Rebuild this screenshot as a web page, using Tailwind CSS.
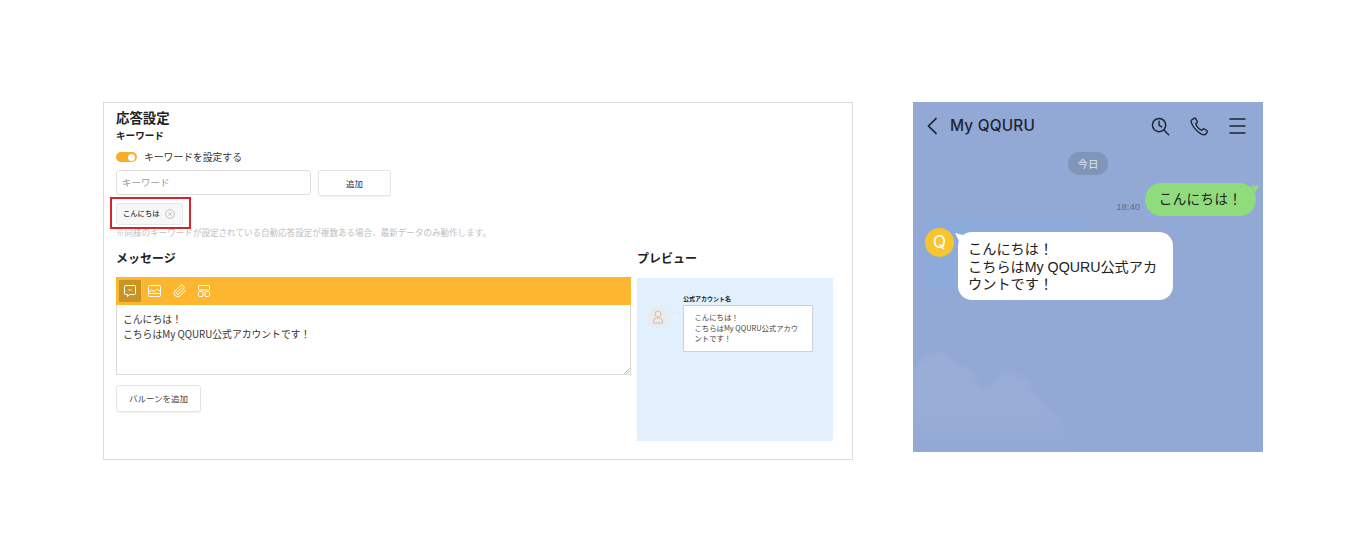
<!DOCTYPE html>
<html lang="ja">
<head>
<meta charset="utf-8">
<script src="https://cdn.jsdelivr.net/npm/@tailwindcss/browser@4"></script>
</head>
<body class="bg-white overflow-hidden">
<main class="w-[1366px] h-[541px] flex items-start pt-[102px] pl-[103px] gap-[60px] font-['Noto_Sans_CJK_JP',sans-serif] text-[#222]">

  <section class="relative w-[750px] h-[358px] border border-[#dcdcdc] pl-[12px] pr-[19px] flex flex-col">
    <h1 class="mt-[5px] text-[13.4px] leading-[18px] font-bold text-[#222]">応答設定</h1>
    <h2 class="mt-[2px] text-[9.6px] leading-[14px] font-bold">キーワード</h2>

    <div class="mt-[8px] flex items-center gap-[7px] h-[14px]">
      <span class="w-[21px] h-[10px] rounded-full bg-[#f9ad28] flex items-center justify-end pr-[2px]"><span class="w-[7px] h-[7px] rounded-full bg-white"></span></span>
      <span class="text-[9.8px] leading-[14px] text-[#333]">キーワードを設定する</span>
    </div>

    <div class="mt-[6px] flex gap-[7px] items-start">
      <div class="w-[195px] h-[25px] border border-[#dedede] rounded-[3px] px-[5px] flex items-center text-[9.5px] text-[#9a9a9a]">キーワード</div>
      <div class="w-[73px] h-[26px] border border-[#e4e4e4] rounded-[3px] shadow-[0_1px_1px_rgba(0,0,0,0.05)] flex items-center justify-center text-[8.5px] text-[#333]">追加</div>
    </div>

    <div class="mt-[7px] w-[67px] h-[22px] rounded-[3px] border border-[#e8e8e8] bg-[#f7f7f7] flex items-center pl-[6px] gap-[6px]">
      <span class="text-[7.3px] font-medium leading-none whitespace-nowrap text-[#333]">こんにちは</span>
      <svg class="w-[10px] h-[10px] shrink-0" viewBox="0 0 10 10" fill="none" stroke="#aaa" stroke-width="0.7"><circle cx="5" cy="5" r="4.4"/><path d="M3.3 3.3l3.4 3.4M6.7 3.3l-3.4 3.4"/></svg>
    </div>
    <p class="mt-[1px] text-[8.55px] leading-[12px] text-[#c0c0c0] whitespace-nowrap">※同様のキーワードが設定されている自動応答設定が複数ある場合、最新データのみ動作します。</p>

    <div class="mt-[11px] flex gap-[6px]">
      <div class="w-[515px] flex flex-col items-start">
        <h2 class="text-[12px] leading-[18px] font-bold">メッセージ</h2>
        <div class="mt-[10px] w-full h-[28px] bg-[#fdb62f] flex items-center pl-[3px]">
          <span class="w-[22px] h-[22px] bg-[#c99325] flex items-center justify-center">
            <svg class="w-[14px] h-[14px]" viewBox="0 0 14 14" fill="none" stroke="#fff" stroke-width="1"><path d="M2.5 1.5h9a1 1 0 0 1 1 1v7a1 1 0 0 1-1 1H6.5L4.5 12.6V10.5h-2a1 1 0 0 1-1-1v-7a1 1 0 0 1 1-1z"/><path d="M5 6h4" stroke-width="0.7"/></svg>
          </span>
          <span class="ml-[7px] w-[13px] h-[13px] flex items-center justify-center">
            <svg class="w-[13px] h-[12px]" viewBox="0 0 13 12" fill="none" stroke="#fff" stroke-width="1"><rect x="0.5" y="0.5" width="12" height="11" rx="1"/><path d="M0.5 7.5l3-2.5 2.5 1.5 3-2.5 3 2M0.5 8.5h12"/></svg>
          </span>
          <span class="ml-[12px] w-[13px] h-[13px] flex items-center justify-center">
            <svg class="w-[14px] h-[14px] shrink-0" viewBox="0 0 24 24" fill="none" stroke="#fff" stroke-width="1.7" stroke-linecap="round" stroke-linejoin="round"><path d="m21.44 11.05-9.19 9.19a6 6 0 0 1-8.49-8.49l8.57-8.57A4 4 0 1 1 18 8.84l-8.59 8.57a2 2 0 0 1-2.83-2.83l8.49-8.48"/></svg>
          </span>
          <span class="ml-[11px] w-[13px] h-[13px] flex items-center justify-center">
            <svg class="w-[12px] h-[12px]" viewBox="0 0 12 12" fill="none" stroke="#fff" stroke-width="1"><rect x="0.5" y="0.5" width="11" height="4.5" rx="1"/><rect x="0.5" y="6.5" width="4.5" height="5" rx="1"/><rect x="7" y="6.5" width="4.5" height="5" rx="1"/></svg>
          </span>
        </div>
        <div class="relative w-full h-[70px] border border-t-0 border-[#d8d8d8] px-[6px] pt-[7px] text-[9.8px] leading-[15px] text-[#333]">
          こんにちは！<br>こちらはMy QQURU公式アカウントです！
          <svg class="absolute right-0 bottom-0 w-[6px] h-[6px]" viewBox="0 0 6 6" stroke="#888" stroke-width="0.6"><path d="M0.5 5.5l5-5M3 5.5l2.5-2.5"/></svg>
        </div>
        <div class="mt-[10px] w-[85px] h-[27px] border border-[#e4e4e4] rounded-[3px] shadow-[0_1px_1px_rgba(0,0,0,0.05)] flex items-center justify-center text-[8.5px] text-[#444]">バルーンを追加</div>
      </div>

      <div class="w-[196px] flex flex-col">
        <h2 class="text-[12px] leading-[18px] font-bold">プレビュー</h2>
        <div class="mt-[11px] h-[163px] bg-[#e2f0fd] flex pt-[16px] pl-[10px]">
          <div class="mt-[12px] w-[22px] h-[22px] rounded-full bg-[#e9ecef] flex items-center justify-center shrink-0">
            <svg class="w-[12px] h-[14px]" viewBox="0 0 12 14" fill="none" stroke="#c9b9a6" stroke-width="0.9"><circle cx="6" cy="4" r="3"/><path d="M1.5 13v-2a3 3 0 0 1 3-3h3a3 3 0 0 1 3 3v2z"/></svg>
          </div>
          <div class="mt-[20px] ml-[4px] w-0 h-0 border-y-[3px] border-y-transparent border-r-[5px] border-r-[#eef3f8]"></div>
          <div class="ml-[5px] flex flex-col">
            <span class="text-[6px] leading-[9px] font-bold text-[#222]">公式アカウント名</span>
            <div class="mt-[2px] w-[130px] h-[47px] bg-white border border-[#cfcfcf] rounded-[1px] pl-[10.5px] pt-[6px] text-[7.35px] leading-[10.5px] text-[#444] whitespace-nowrap">こんにちは！<br>こちらはMy QQURU公式アカウ<br>ントです！</div>
          </div>
        </div>
      </div>
    </div>

    <div class="absolute left-[6px] top-[94px] w-[81px] h-[32px] border-2 border-[#d3252b]"></div>
  </section>

  <section class="relative w-[350px] h-[350px] bg-[#93a9d5] overflow-hidden flex flex-col font-['Liberation_Sans','Noto_Sans_CJK_JP',sans-serif]">
    <svg class="absolute left-0 bottom-0 w-[170px] h-[110px]" viewBox="0 0 170 110" style="filter:blur(3px)">
      <defs><linearGradient id="cloud" gradientUnits="userSpaceOnUse" x1="0" y1="10" x2="0" y2="108"><stop offset="0" stop-color="#a0b3d9" stop-opacity="0.5"/><stop offset="0.6" stop-color="#a0b3d9" stop-opacity="0.4"/><stop offset="1" stop-color="#a0b3d9" stop-opacity="0"/></linearGradient></defs>
      <path fill="url(#cloud)" d="M0 108V30C8 16 24 8 32 12C38 16 42 24 48 26C56 24 60 32 64 44C68 48 72 46 76 48C82 32 100 26 112 38C122 50 132 68 150 82L160 108Z"/>
    </svg>
    <div class="absolute left-[10px] top-[118px] w-[162px] h-[70px] bg-[#8dabda]"></div>

    <header class="relative h-[48px] mb-[2px] flex items-center pl-[13px] pr-[17px] shrink-0 text-[#1d2433]">
      <svg class="w-[12px] h-[18px] shrink-0" viewBox="0 0 12 18" fill="none" stroke="#1d2433" stroke-width="1.7"><path d="M10.5 1.2L2.5 9l8 7.8"/></svg>
      <span class="ml-[12px] text-[15.4px] font-medium tracking-[0.2px] font-['Inter',sans-serif]">My QQURU</span>
      <svg class="ml-auto w-[19px] h-[19px]" viewBox="0 0 20 20" fill="none" stroke="#1d2433" stroke-width="1.5" stroke-linecap="round"><circle cx="8.5" cy="8.5" r="7"/><path d="M13.6 13.6l5 5M8.5 4.5v4.3l2.8 1.7"/></svg>
      <svg class="ml-[20px] w-[19px] h-[19px]" viewBox="0 0 20 20" fill="none" stroke="#1d2433" stroke-width="1.4"><path d="M2.2 2.7l2.5-1.5c.5-.3 1 0 1.3.5l1.6 3c.2.5.1 1-.3 1.3L6 7c.6 2.6 3.6 6.3 6.6 7l1.3-1.3c.4-.4 1-.4 1.4-.1l2.6 1.9c.5.4.5 1 .2 1.5l-1.5 1.9c-.8 1-2.8.9-5-.2C7 15.2 2.2 9.5 1.3 5.5c-.3-1.3.1-2.3.9-2.8z"/></svg>
      <svg class="ml-[20px] w-[17px] h-[16px]" viewBox="0 0 17 16" stroke="#1d2433" stroke-width="1.5"><path d="M0.5 1h16M0.5 8h16M0.5 15h16"/></svg>
    </header>

    <div class="relative flex justify-center">
      <span class="w-[40px] h-[23px] rounded-full bg-[#8096b8] text-[#dfe6f2] text-[10.5px] flex items-center justify-center font-['Noto_Sans_CJK_JP',sans-serif]">今日</span>
    </div>

    <div class="relative mt-[8px] flex justify-end items-end pr-[7px]">
      <span class="mr-[5px] mb-[3px] text-[9.5px] leading-[12px] text-[#5f6e88]">18:40</span>
      <div class="relative w-[111px] h-[33px] pt-[1px] rounded-[17px] bg-[#8fdc7d] flex items-center justify-center text-[13.5px] text-[#222] tracking-[0.4px]">
        こんにちは！
        <svg class="absolute right-[-3px] top-[2px] w-[8px] h-[8px]" viewBox="0 0 8 8" fill="#8fdc7d"><path d="M0 1l8-1-4 8z"/></svg>
      </div>
    </div>

    <div class="relative mt-[16px] pl-[12px] flex items-start">
      <div class="mt-[-4px] w-[29px] h-[29px] rounded-full bg-[#f7c52e] flex items-center justify-center shrink-0 text-white text-[17px] font-normal font-['Inter',sans-serif]">Q</div>
      <div class="relative ml-[4px] w-[215px] h-[68px] rounded-[14px] bg-white pl-[10px] pt-[9px] text-[14.2px] leading-[17.5px] text-[#222] whitespace-nowrap">
        こんにちは！<br>こちらはMy QQURU公式アカ<br>ウントです！
        <svg class="absolute left-[-3px] top-[1px] w-[8px] h-[8px]" viewBox="0 0 8 8" fill="#fff"><path d="M0 0l8 2-4 6z"/></svg>
      </div>
    </div>
  </section>
</main>
</body>
</html>
